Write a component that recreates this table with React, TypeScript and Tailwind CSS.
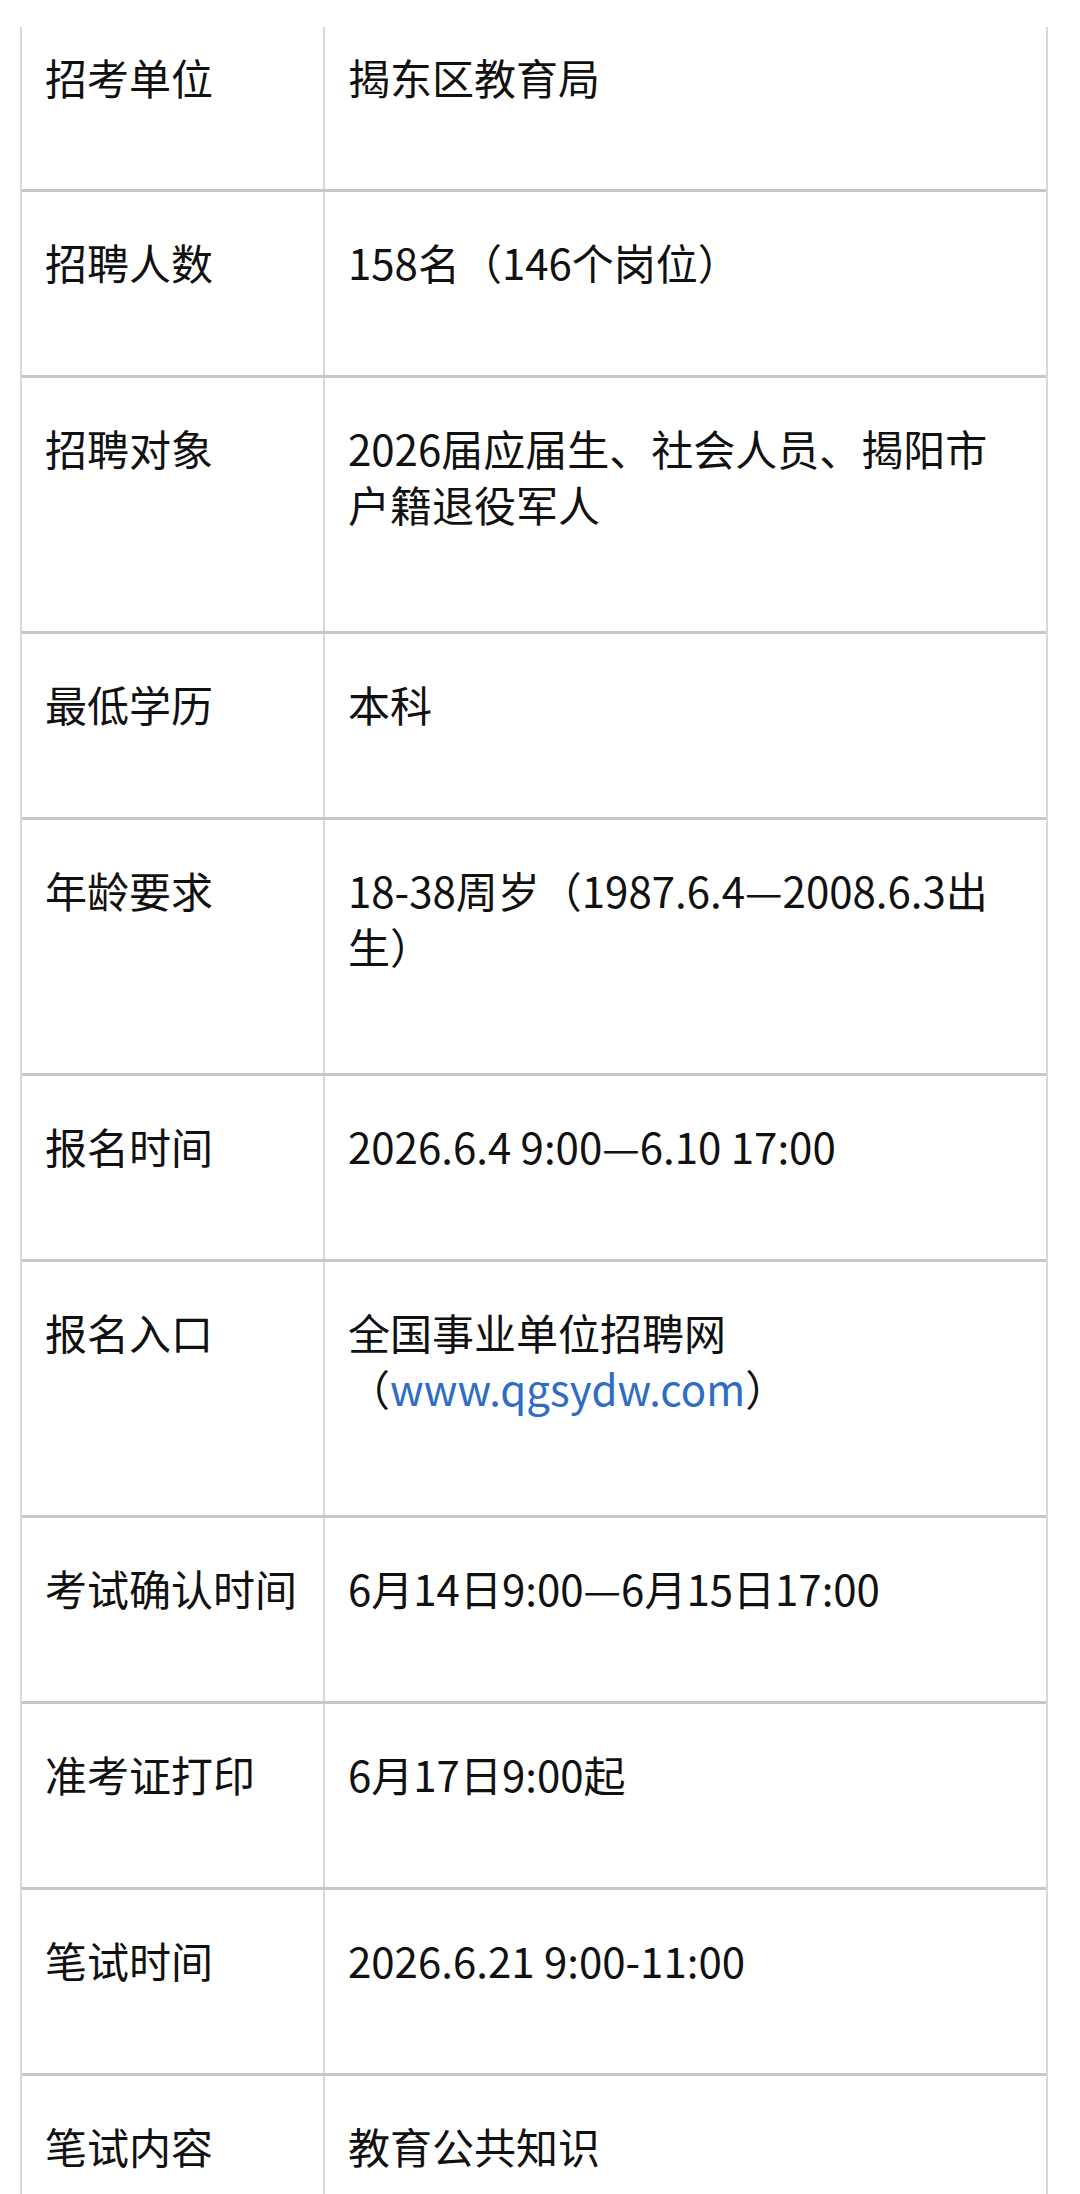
type Row = {
  label: string;
  value: React.ReactNode;
  lines?: 1 | 2;
};

const rows: Row[] = [
  { label: "招考单位", value: "揭东区教育局" },
  { label: "招聘人数", value: "158名（146个岗位）" },
  { label: "招聘对象", value: "2026届应届生、社会人员、揭阳市户籍退役军人", lines: 2 },
  { label: "最低学历", value: "本科" },
  { label: "年龄要求", value: "18-38周岁（1987.6.4—2008.6.3出生）", lines: 2 },
  { label: "报名时间", value: "2026.6.4 9:00—6.10 17:00" },
  {
    label: "报名入口",
    value: (
      <>
        全国事业单位招聘网
        <span className="whitespace-nowrap">
          （<span className="text-[#2f6cc4]">www.qgsydw.com</span>）
        </span>
      </>
    ),
    lines: 2,
  },
  { label: "考试确认时间", value: "6月14日9:00—6月15日17:00" },
  { label: "准考证打印", value: "6月17日9:00起" },
  { label: "笔试时间", value: "2026.6.21 9:00-11:00" },
  { label: "笔试内容", value: "教育公共知识" },
];

export default function App() {
  return (
    <div
      className="h-[2194px] overflow-hidden bg-white pt-[27px] text-[42px] leading-[56px] text-[#111]"
      style={{ fontFamily: '"Noto Sans CJK SC", "Noto Sans", sans-serif' }}
    >
      <div className="ml-[20px] w-[1028px] border-x-2 border-[#d8d8d8]">
        {rows.map((row, i) => {
          const first = i === 0;
          const last = i === rows.length - 1;
          const pad = [
            first ? "pt-[22px]" : "pt-[42px]",
            row.lines === 2 ? "pb-[99px]" : first ? "pb-[84px]" : "pb-[85px]",
          ].join(" ");
          return (
            <div
              key={row.label}
              className={
                last
                  ? "flex"
                  : "flex border-b-[3px] border-[#c6c6c6]"
              }
            >
              <div
                className={`w-[303px] shrink-0 border-r-2 border-[#d8d8d8] pl-[23px] pr-[18px] ${pad}`}
              >
                {row.label}
              </div>
              <div className={`min-w-0 flex-1 pl-[23px] pr-[40px] ${pad}`}>
                {row.value}
              </div>
            </div>
          );
        })}
      </div>
    </div>
  );
}
